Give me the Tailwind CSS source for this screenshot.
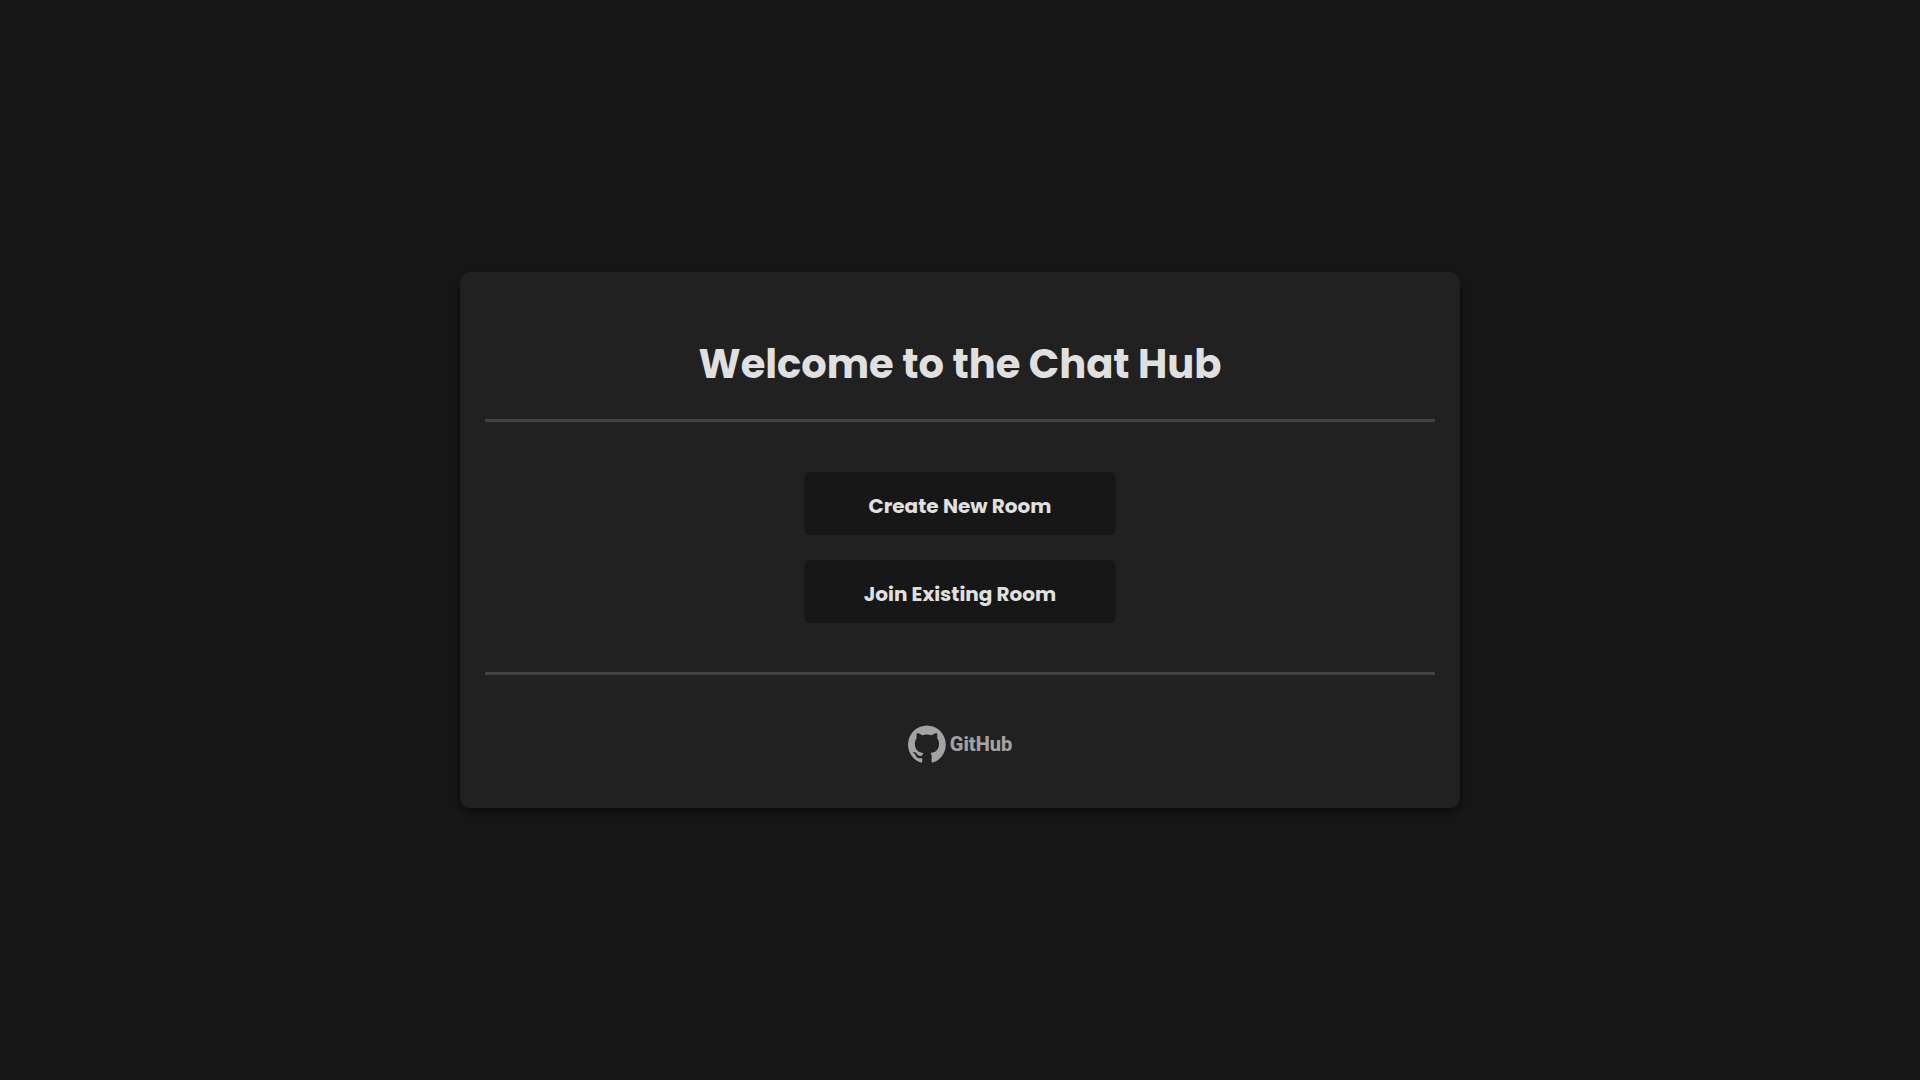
<!DOCTYPE html>
<html lang="en">
<head>
<meta charset="utf-8">
<meta name="viewport" content="width=device-width, initial-scale=1">
<title>Chat Hub</title>
<script src="https://cdn.jsdelivr.net/npm/@tailwindcss/browser@4"></script>
</head>
<body class="flex min-h-screen items-center justify-center bg-[#171717] font-[Poppins,Inter,sans-serif] text-[#e0e0e0]">
<main class="flex w-full max-w-[1000px] flex-col items-center rounded-[10px] bg-[#212121] px-[25px] pt-[62px] pb-[45px] shadow-[0_4px_10px_rgba(0,0,0,0.5)]">
  <h1 class="text-center text-[40px] leading-[60px] font-bold">Welcome to the Chat Hub</h1>
  <hr class="mt-[25px] w-full border-0 border-t-3 border-[#424242]">
  <div class="flex w-full max-w-[312px] flex-col gap-[25px] pt-[50px] pb-[49px]">
    <button type="button" class="h-[63px] rounded-md bg-[#171717] pt-1 text-[20px] font-bold">Create New Room</button>
    <button type="button" class="h-[63px] rounded-md bg-[#171717] pt-1 text-[20px] font-bold">Join Existing Room</button>
  </div>
  <hr class="w-full border-0 border-t-3 border-[#424242]">
  <a href="#" class="mt-[50px] flex items-center gap-1 font-[Roboto,sans-serif] text-[20px] leading-[38px] font-extrabold text-[#a3a3a3]">
    <svg class="size-[38px]" viewBox="0 0 98 96" fill="currentColor" aria-hidden="true"><path fill-rule="evenodd" clip-rule="evenodd" d="M48.854 0C21.839 0 0 22 0 49.217c0 21.756 13.993 40.172 33.405 46.69 2.427.49 3.316-1.059 3.316-2.362 0-1.141-.08-5.052-.08-9.127-13.59 2.934-16.42-5.867-16.42-5.867-2.184-5.704-5.42-7.17-5.42-7.17-4.448-3.015.324-3.015.324-3.015 4.934.326 7.523 5.052 7.523 5.052 4.367 7.496 11.404 5.378 14.235 4.074.404-3.178 1.699-5.378 3.074-6.6-10.839-1.141-22.243-5.378-22.243-24.283 0-5.378 1.94-9.778 5.014-13.2-.485-1.222-2.184-6.275.486-13.038 0 0 4.125-1.304 13.426 5.052a46.97 46.97 0 0 1 12.214-1.63c4.125 0 8.33.571 12.213 1.63 9.302-6.356 13.427-5.052 13.427-5.052 2.67 6.763.97 11.816.485 13.038 3.155 3.422 5.015 7.822 5.015 13.2 0 18.905-11.404 23.06-22.324 24.283 1.78 1.548 3.316 4.481 3.316 9.126 0 6.6-.08 11.897-.08 13.526 0 1.304.89 2.853 3.316 2.364 19.412-6.52 33.405-24.935 33.405-46.691C97.707 22 75.788 0 48.854 0z"/></svg>
    <span>GitHub</span>
  </a>
</main>
</body>
</html>
